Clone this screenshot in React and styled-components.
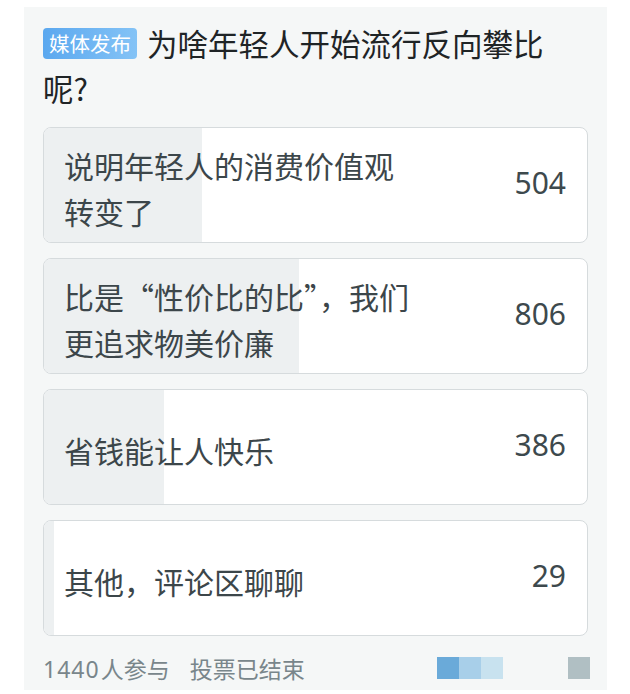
import React from "react"
import styled, { createGlobalStyle } from "styled-components"

const GlobalStyle = createGlobalStyle`
  html, body {
    margin: 0;
    padding: 0;
    background: #ffffff;
  }
  body {
    font-family: "Noto Sans CJK SC", "Noto Sans", sans-serif;
  }
`

const Page = styled.div`
  width: 630px;
  height: 694px;
  padding: 7px 23px 4px 24px;
  box-sizing: border-box;
`

const Panel = styled.div`
  background: #f5f7f7;
  height: 100%;
  padding: 14px 19px 0 19px;
  box-sizing: border-box;
  display: flex;
  flex-direction: column;
`

const Title = styled.h1`
  margin: 0;
  font-size: 30.5px;
  font-weight: 400;
  line-height: 45px;
  color: #1f2426;
`

const TitleRow = styled.div`
  display: flex;
  align-items: center;
  gap: 10px;
`

const Tag = styled.span`
  flex: none;
  height: 31px;
  line-height: 31px;
  padding: 0 6px;
  border-radius: 4px;
  background: linear-gradient(90deg, #5ba8ef, #84c3f6);
  color: #ffffff;
  font-size: 20.5px;
`

const Options = styled.div`
  margin-top: 16px;
  display: flex;
  flex-direction: column;
  gap: 15px;
`

const Card = styled.div`
  position: relative;
  height: 116px;
  box-sizing: border-box;
  border: 1px solid #d6dbdd;
  border-radius: 8px;
  background: #ffffff;
  overflow: hidden;
`

const Bar = styled.div`
  position: absolute;
  left: 0;
  top: 0;
  bottom: 0;
  background: #edf0f1;
`

const CardBody = styled.div`
  position: relative;
  height: 100%;
  display: flex;
  align-items: center;
  justify-content: space-between;
  padding: 0 21px 0 20px;
`

const Label = styled.div`
  font-size: 30px;
  line-height: 46px;
  color: #3c464a;
  padding-top: 6px;
  max-width: 360px;
`

const Count = styled.div`
  font-size: 30px;
  color: #3d494d;
  padding-bottom: 6px;
  font-family: "Noto Sans", "Noto Sans CJK SC", sans-serif;
`

const Footer = styled.div`
  margin-top: 18px;
  display: flex;
  align-items: center;
  height: 28px;
`

const FooterText = styled.div`
  font-size: 23px;
  color: #79868b;
  flex: 1;
`

const Num = styled.span`
  font-family: "Noto Sans", sans-serif;
  letter-spacing: 1px;
  margin-right: 1px;
`

const Gap = styled.span`
  display: inline-block;
  width: 20px;
`

const Swatches = styled.div`
  display: flex;
  margin-right: 65px;
`

const Swatch = styled.div`
  width: 22px;
  height: 22px;
  background: ${(p) => p.$color};
`

const Square = styled.div`
  width: 22px;
  height: 22px;
  background: #b0bfc3;
  margin-right: -2px;
`

const options = [
  { label: ["说明年轻人的消费价值观", "转变了"], count: 504, bar: 158 },
  { label: ["比是“性价比的比”，我们", "更追求物美价廉"], count: 806, bar: 255 },
  { label: ["省钱能让人快乐"], count: 386, bar: 120 },
  { label: ["其他，评论区聊聊"], count: 29, bar: 10 },
]

export default function App() {
  return (
    <Page>
      <GlobalStyle />
      <Panel>
        <Title>
          <TitleRow>
            <Tag>媒体发布</Tag>
            <span>为啥年轻人开始流行反向攀比</span>
          </TitleRow>
          <div>呢?</div>
        </Title>
        <Options>
          {options.map((o) => (
            <Card key={o.count}>
              <Bar style={{ width: o.bar }} />
              <CardBody>
                <Label>
                  {o.label.map((line) => (
                    <div key={line}>{line}</div>
                  ))}
                </Label>
                <Count>{o.count}</Count>
              </CardBody>
            </Card>
          ))}
        </Options>
        <Footer>
          <FooterText>
            <Num>1440</Num>人参与<Gap />投票已结束
          </FooterText>
          <Swatches>
            <Swatch $color="#6aaad9" />
            <Swatch $color="#a8cfe9" />
            <Swatch $color="#c8e2ef" />
          </Swatches>
          <Square />
        </Footer>
      </Panel>
    </Page>
  )
}
